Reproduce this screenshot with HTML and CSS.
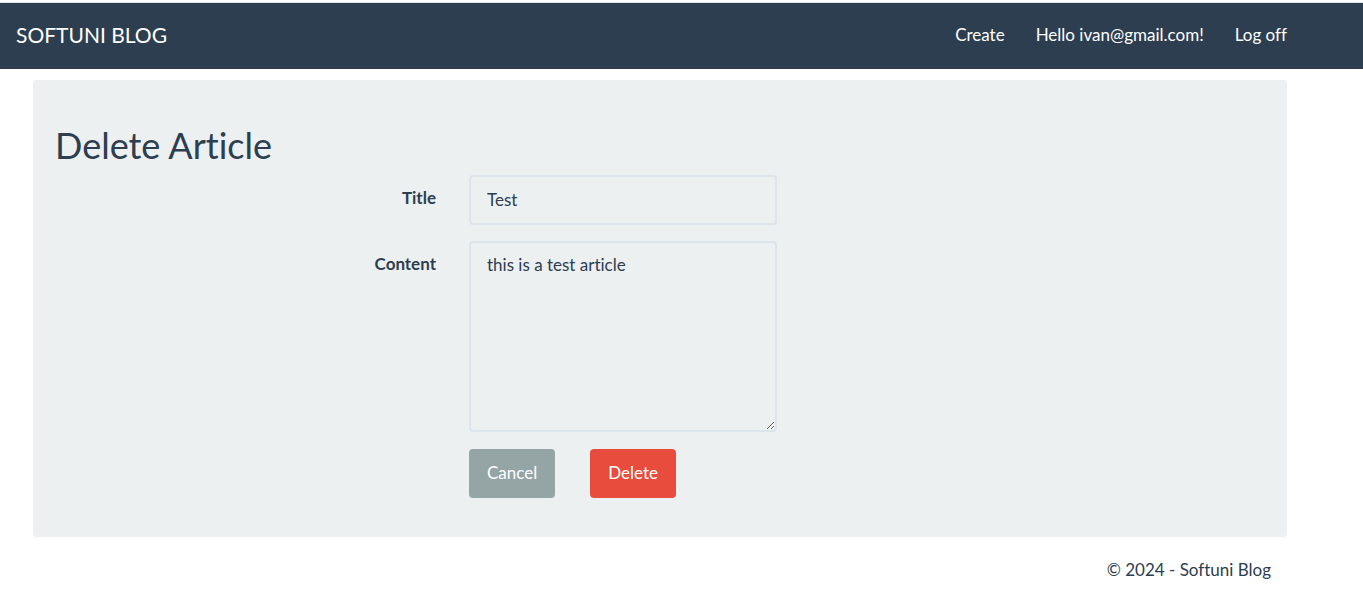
FILE: index.html
```html
<!DOCTYPE html>
<html lang="en">
<head>
<meta charset="utf-8">
<title>Delete Article - SoftUni Blog</title>
<link rel="stylesheet" href="styles.css">
</head>
<body>
<header class="navbar">
  <a class="brand" href="#">SOFTUNI BLOG</a>
  <nav class="nav">
    <a href="#">Create</a>
    <a href="#">Hello ivan@gmail.com!</a>
    <a href="#">Log off</a>
  </nav>
</header>
<main class="container">
  <section class="well">
    <h2 class="heading">Delete Article</h2>
    <form class="form">
      <label class="label" for="title">Title</label>
      <input class="control" id="title" type="text" value="Test">
      <label class="label" for="content">Content</label>
      <textarea class="control area" id="content">this is a test article</textarea>
      <div class="actions">
        <button class="btn cancel" type="button">Cancel</button>
        <button class="btn delete" type="submit">Delete</button>
      </div>
    </form>
  </section>
  <footer class="footer">© 2024 - Softuni Blog</footer>
</main>
</body>
</html>
```
FILE: styles.css
```css
* { box-sizing: border-box; }
body {
  margin: 0;
  padding-top: 2px;
  background: #fff;
  color: #2c3e50;
  font-family: Lato, sans-serif;
  font-size: 17px;
  font-variant-ligatures: none;
  line-height: 24px;
}
.navbar {
  display: flex;
  justify-content: space-between;
  align-items: center;
  padding: 20px 76px 22px 16px;
  border-top: 1px solid #dcdedf;
  background: #2c3e50;
}
.navbar a { color: #fff; text-decoration: none; }
.brand { font-size: 21px; }
.nav { display: flex; gap: 31px; }
.container { padding: 11px 76px 0 33px; }
.well {
  padding: 44px 22px 39px;
  border-radius: 4px;
  background: #ecf0f1;
}
.heading {
  margin: 0 0 9px;
  font-size: 36px;
  font-weight: 400;
  line-height: 42px;
}
.form {
  display: grid;
  grid-template-columns: 381px 308px;
  gap: 16px 33px;
  align-items: start;
}
.label {
  padding-top: 11px;
  font-weight: 700;
  text-align: right;
}
.control {
  width: 100%;
  height: 50px;
  padding: 9px 16px 11px;
  border: 2px solid #dce4ec;
  border-radius: 4px;
  background: transparent;
  color: #2c3e50;
  font: inherit;
  font-variant-ligatures: none;
}
.area { display: block; height: 191px; padding-top: 10px; resize: both; }
.actions { grid-column: 2; display: flex; gap: 35px; padding-top: 1px; }
.btn {
  height: 49px;
  padding: 0 18px 2px;
  border: 0;
  border-radius: 4px;
  color: #fff;
  font: inherit;
}
.cancel { background: #95a5a6; }
.delete { background: #e74c3c; }
.footer { padding: 21px 16px 0; text-align: right; }
```
